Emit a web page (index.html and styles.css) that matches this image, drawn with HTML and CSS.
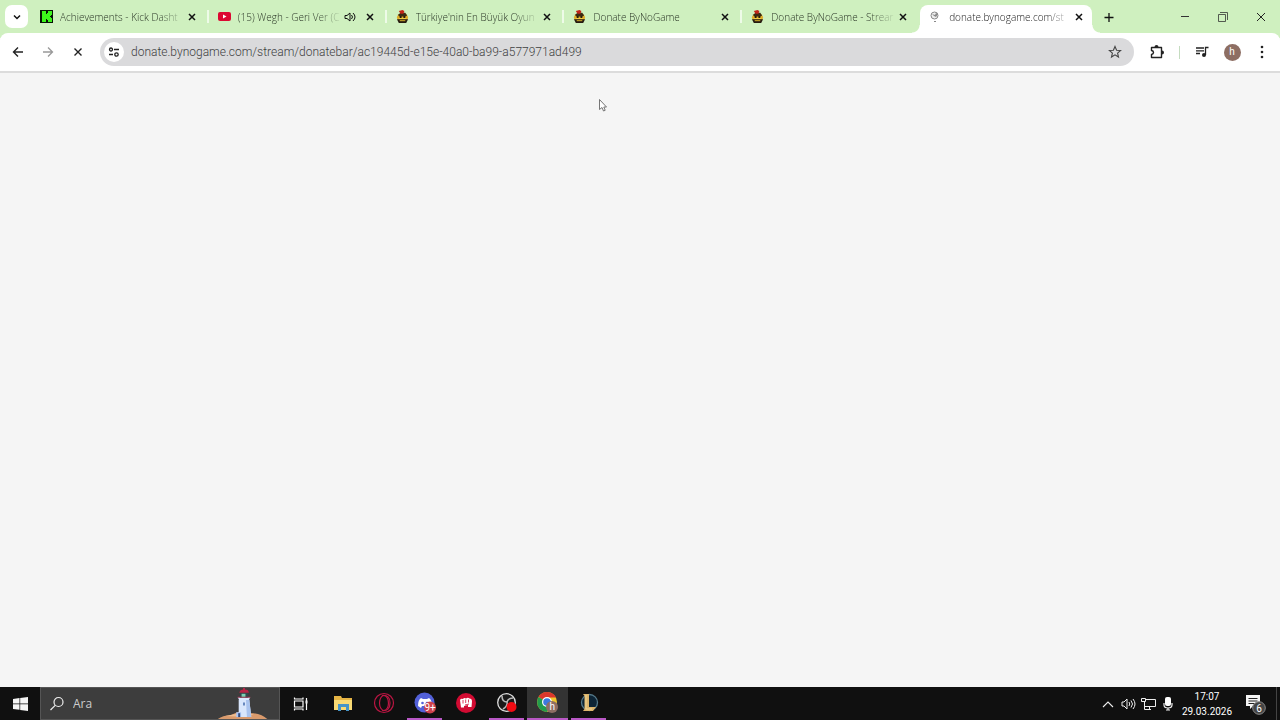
FILE: index.html
```html
<!DOCTYPE html>
<html lang="tr">
<head>
    <meta charset="UTF-8">
    <meta name="viewport" content="width=device-width, initial-scale=1.0">
    <title>donate.bynogame.com</title>
    <link rel="stylesheet" href="styles.css">
</head>
<body>
    <!-- shared icons -->
    <svg class="defs" aria-hidden="true">
        <symbol id="close" viewBox="0 0 12 12">
            <path d="M3 3l6 6M9 3l-6 6" fill="none" stroke="#111" stroke-width="1.5"/>
        </symbol>
        <symbol id="bee" viewBox="0 0 14 14">
            <ellipse cx="7" cy="8" rx="6" ry="4.6" fill="#e0ad28"/>
            <path d="M2 5.5L5 3h5l2 3-2 1H4z" fill="#3b2a12"/>
            <path d="M3 1l4-1 2 1-1 3H5z" fill="#c22418"/>
            <path d="M4 6.500h2v2H4zM8 6.500h2v2H8z" fill="#271b0c"/>
            <path d="M3 9.500h8" stroke="#f7dc52" stroke-width="1"/>
            <path d="M1 10h12l-2 4H3z" fill="#251a10"/>
            <path d="M4 11.500h6" stroke="#e5b92c" stroke-width="1"/>
        </symbol>
    </svg>

    <header class="tabstrip">
        <button class="tab-search" aria-label="Search tabs">
            <svg width="10" height="10" viewBox="0 0 10 10"><path d="M2 3.5l3 3 3-3" fill="none" stroke="#111" stroke-width="1.5"/></svg>
        </button>
        <nav class="tabs">
            <div class="tab">
                <svg class="favicon" viewBox="0 0 13 13"><path d="M0 0h13v13H0z" fill="#071506"/><path d="M2 1h4v3h1V3h1V1h4v4h-1v1h-1v1h1v1h1v4H8v-2H7V9H6v3H2z" fill="#3df51b"/></svg>
                <a class="title" href="#">Achievements - Kick Dasht</a>
                <button class="close" aria-label="Close tab"><svg><use href="#close"/></svg></button>
            </div>
            <div class="tab">
                <svg class="favicon" viewBox="0 0 13 13"><rect y="2" width="13" height="9" rx="2" fill="#dc0932"/><path d="M5 4.500v4l3.500-2z" fill="#fff"/></svg>
                <a class="title" href="#">(15) Wegh - Geri Ver (C</a>
                <button class="close" aria-label="Mute tab"><svg viewBox="0 0 12 12"><path d="M1 4.500h2L6 2v8L3 7.500H1z" fill="none" stroke="#111"/><path d="M7.500 4q2 2 0 4M9 2q4 4 0 8" fill="none" stroke="#111"/></svg></button>
                <button class="close" aria-label="Close tab"><svg><use href="#close"/></svg></button>
            </div>
            <div class="tab">
                <svg class="favicon"><use href="#bee"/></svg>
                <a class="title" href="#">Türkiye'nin En Büyük Oyun</a>
                <button class="close" aria-label="Close tab"><svg><use href="#close"/></svg></button>
            </div>
            <div class="tab">
                <svg class="favicon"><use href="#bee"/></svg>
                <a class="title" href="#">Donate ByNoGame</a>
                <button class="close" aria-label="Close tab"><svg><use href="#close"/></svg></button>
            </div>
            <div class="tab">
                <svg class="favicon"><use href="#bee"/></svg>
                <a class="title" href="#">Donate ByNoGame - Strear</a>
                <button class="close" aria-label="Close tab"><svg><use href="#close"/></svg></button>
            </div>
            <div class="tab active">
                <svg class="favicon" viewBox="0 0 13 13"><circle cx="5.500" cy="5.500" r="3.500" fill="#eee" stroke="#888"/><path d="M3 4l3 1 1-2 2 1-2 3-2-1z" fill="#888"/><path d="M5 11.500h2" stroke="#888"/></svg>
                <a class="title" href="#">donate.bynogame.com/st</a>
                <button class="close" aria-label="Close tab"><svg><use href="#close"/></svg></button>
            </div>
        </nav>
        <button class="new-tab" aria-label="New tab">
            <svg width="12" height="12" viewBox="0 0 12 12"><path d="M6 2v9M1.500 6.500h9" stroke="#111" stroke-width="1.300"/></svg>
        </button>
        <div class="window-buttons">
            <button aria-label="Minimize"><svg width="10" height="10" viewBox="0 0 10 10"><path d="M1 4.500h8" stroke="#333"/></svg></button>
            <button aria-label="Restore"><svg width="10" height="10" viewBox="0 0 10 10"><path d="M.5 2.500h7v7h-7zM2 .5h7.500V8" fill="none" stroke="#333" stroke-width=".8"/></svg></button>
            <button aria-label="Close"><svg width="10" height="10" viewBox="0 0 10 10"><path d="M1 1l8 8M9 1L1 9" stroke="#222"/></svg></button>
        </div>
    </header>

    <div class="toolbar">
        <button class="tool" aria-label="Back"><svg width="12" height="12" viewBox="0 0 12 12"><path d="M11 6H2M6 1.500L1.500 6 6 10.500" fill="none" stroke="#222" stroke-width="1.400"/></svg></button>
        <button class="tool" aria-label="Forward"><svg width="12" height="12" viewBox="0 0 12 12"><path d="M1 6h9M6 1.500l4.500 4.500L6 10.500" fill="none" stroke="#999" stroke-width="1.300"/></svg></button>
        <button class="tool" aria-label="Stop"><svg width="12" height="12" viewBox="0 0 12 12"><path d="M2.500 2.500l7 7M9.500 2.500l-7 7" stroke="#222" stroke-width="1.400"/></svg></button>
        <div class="omnibox">
            <button class="site-info" aria-label="Site information">
                <svg width="12" height="12" viewBox="0 0 12 12" fill="none" stroke="#222" stroke-width="1.300"><circle cx="3" cy="3.500" r="1.500"/><path d="M6 3.500h5M1 8.500h4"/><circle cx="8.500" cy="8.500" r="1.700"/></svg>
            </button>
            <input class="address" type="text" aria-label="Address" value="donate.bynogame.com/stream/donatebar/ac19445d-e15e-40a0-ba99-a577971ad499">
            <button class="star" aria-label="Bookmark this page">
                <svg width="14" height="14" viewBox="0 0 14 14"><path d="M7 1.500l1.600 3.700 4 .3-3 2.600.9 3.900L7 9.900 3.500 12l.9-3.900-3-2.600 4-.3z" fill="none" stroke="#444" stroke-width="1.100"/></svg>
            </button>
        </div>
        <button class="tool" aria-label="Extensions"><svg width="16" height="16" viewBox="0 0 16 16"><path d="M2.500 3.500h10v10h-10v-3q2-.3 2-2t-2-2z" fill="none" stroke="#222" stroke-width="1.400" stroke-linejoin="round"/><path d="M5.500 3a2 2 0 0 1 4 0zM13 6.500a2 2 0 0 1 0 4z" fill="#222"/></svg></button>
        <span class="divider"></span>
        <button class="tool" aria-label="Media"><svg width="14" height="14" viewBox="0 0 14 14"><path d="M1 3h8M1 5.800h8M1 8.500h4M10.500 10V2.500h3" fill="none" stroke="#222" stroke-width="1.300"/><circle cx="9" cy="10" r="2" fill="#222"/></svg></button>
        <button class="tool" aria-label="Profile"><span class="avatar">h</span></button>
        <button class="tool" aria-label="Menu"><svg width="4" height="14" viewBox="0 0 4 14" fill="#222"><circle cx="2" cy="2" r="1.300"/><circle cx="2" cy="7" r="1.300"/><circle cx="2" cy="12" r="1.300"/></svg></button>
    </div>

    <main class="page">
        <svg class="cursor" width="8" height="13" viewBox="0 0 8 13"><path d="M.5.500v10L3 8.500 4.500 12l1.700-.7L4.800 8h2.700z" fill="#fff" stroke="#666" stroke-width=".9"/></svg>
    </main>

    <footer class="taskbar">
        <button class="start" aria-label="Start">
            <svg width="15" height="14" viewBox="0 0 15 14" fill="#f4f4f4"><path d="M0 2l6.500-1v5.500H0zM7.200.900L15 0v6.500H7.200zM0 7.200h6.500v5.600L0 12zM7.200 7.200H15V14l-7.800-1z"/></svg>
        </button>
        <div class="search">
            <svg width="16" height="16" viewBox="0 0 16 16"><circle cx="9.500" cy="6" r="4.500" fill="none" stroke="#eee" stroke-width="1.200"/><path d="M6.200 9.300L1.500 14" stroke="#eee" stroke-width="1.200"/></svg>
            <input type="text" aria-label="Ara" placeholder="Ara">
            <svg class="lighthouse" width="54" height="31" viewBox="0 0 54 32">
                <path d="M0 32q5-4 13-4l7-3 17 1q9 1 14 6z" fill="#d99a6c"/>
                <path d="M8 29l14-3 15 1-7 3z" fill="#edbd91"/>
                <path d="M21.500 12h11l2 18h-13z" fill="#d8e6fc"/>
                <path d="M29 12h3.500l2 18H30z" fill="#a9c3ee"/>
                <path d="M19 25h5v5h-5z" fill="#a9c5f3"/>
                <path d="M21 26h2v4h-2z" fill="#344d7e"/>
                <path d="M26 15h2v3h-2z" fill="#6485bd"/>
                <path d="M20.500 9.500h13l-1.500 3H22z" fill="#dbe9ff"/>
                <path d="M23 5h8v5h-8z" fill="#31494d"/>
                <path d="M24.500 6h4v4h-4z" fill="#7cd0b1"/>
                <path d="M20.500 9.500h13" stroke="#9c304c"/>
                <path d="M22 5q1-3.500 4-3.500V0h2v1.500q4 0 4 3.500z" fill="#b92445"/>
            </svg>
        </div>
        <button class="task-view" aria-label="Task view">
            <svg width="15" height="14" viewBox="0 0 15 14" fill="none" stroke="#fff" stroke-width="1.200"><path d="M1.500 4h8.500v6H1.500zM1.500.500v1.500h8.500V.5M1.500 13.500V12h8.500v1.500M13.500 1v12"/><path d="M12.500 3.500h2v3h-2z" fill="#eee" stroke="none"/></svg>
        </button>
        <nav class="apps">
            <button class="app" aria-label="File Explorer"><svg width="20" height="20" viewBox="0 0 20 20"><path d="M1 3h7l1 2h10v12H1z" fill="#e6b545"/><path d="M1 7h18v10H1z" fill="#f9da74"/><path d="M5 17v-6h11v7h-3v-4H8v4H5z" fill="#4695c8"/></svg></button>
            <button class="app" aria-label="Opera GX"><svg width="22" height="22" viewBox="0 0 22 22" fill="none" stroke="#bb1643" stroke-width="1.200"><circle cx="11" cy="11" r="9.500"/><ellipse cx="11" cy="11" rx="4.500" ry="7.500"/><path d="M9 3.500q8-1 8 7.500t-8 7.500"/></svg></button>
            <button class="app open" aria-label="Discord"><svg width="22" height="22" viewBox="0 0 22 22"><circle cx="10.500" cy="10.500" r="10" fill="#5260d8"/><path d="M4 14q0-6 3-8l2 1h4l2-1q3 2 3 8l-3 2-2-2H8l-1 2z" fill="#fff"/><circle cx="8.500" cy="11" r="1.300" fill="#5260d8"/><circle cx="13" cy="11" r="1.300" fill="#5260d8"/><circle cx="16" cy="15.500" r="6" fill="#cc414c"/><text class="badge" x="10.500" y="19">9+</text></svg></button>
            <button class="app" aria-label="Riot Client"><svg width="20" height="20" viewBox="0 0 20 20"><circle cx="10" cy="10" r="10" fill="#d20b32"/><path d="M4 7q1-2 3-1 1-1.500 3-.5 2-1.500 3.500 0 2.500 0 2.500 3l-.5 5.500H12V12l-4 1v1.500H5z" fill="#fff"/><path d="M7 7v3.500M9.700 6.500v3.500M12.500 6.500v3M9 12l4-1" stroke="#d20b32" stroke-width=".8"/></svg></button>
            <button class="app open" aria-label="OBS Studio"><svg width="20" height="20" viewBox="0 0 20 20"><circle cx="9.500" cy="9.500" r="8.800" fill="#191919" stroke="#ddd" stroke-width="1.300"/><path d="M5 3q0 6 5 6M16 5q-5 0-6 4M10 9q1 4-4 7" fill="none" stroke="#bbb" stroke-width="1.500"/><circle cx="14.500" cy="14" r="5" fill="#f00b12"/></svg></button>
            <button class="app open current" aria-label="Google Chrome"><svg width="22" height="22" viewBox="0 0 22 22"><circle cx="10" cy="10" r="10" fill="#efc72e"/><path d="M10 10L1.500 5A10 10 0 0 1 19 5.500h-9z" fill="#db362c"/><path d="M10 10L1.500 5A10 10 0 0 0 10 20l4-7z" fill="#229b4c"/><circle cx="10" cy="10" r="5" fill="#fff"/><circle cx="10" cy="10" r="3.800" fill="#3c79df"/><circle cx="15" cy="15" r="6" fill="#8d6e63"/><text class="badge" x="12.500" y="18">h</text></svg></button>
            <button class="app open" aria-label="League of Legends"><svg width="20" height="20" viewBox="0 0 20 20"><circle cx="10.500" cy="9.500" r="8" fill="#0e2536" stroke="#54798a" stroke-width="1.300"/><path d="M4 1h6v13h7l-3 4H4l1.500-2V3z" fill="#dcb56c"/><path d="M7 2v14h6" fill="none" stroke="#f0d596"/></svg></button>
        </nav>
        <div class="tray">
            <button aria-label="Show hidden icons"><svg width="12" height="12" viewBox="0 0 12 12"><path d="M1 9l5-5 5 5" fill="none" stroke="#eee" stroke-width="1.100"/></svg></button>
            <button aria-label="Volume"><svg width="15" height="14" viewBox="0 0 15 14" fill="none" stroke="#eee"><path d="M1 5h2l3-3v10L3 9H1zM8 5q1.500 2 0 4M10 3.500q3 3.500 0 7M12 2q4 5 0 10"/></svg></button>
            <button aria-label="Network"><svg width="15" height="14" viewBox="0 0 15 14" fill="none" stroke="#eee"><path d="M4 2.500h10.500v7H4M3.500 5v7.500H10M8.500 10v2M.5 1.500h4v3h-4z"/></svg></button>
            <button aria-label="Microphone"><svg width="12" height="14" viewBox="0 0 12 14"><rect x="3" y="0" width="6" height="9" rx="2" fill="#fff"/><path d="M2 6v2q0 3 4 3t4-3V6M6 11v2.500M4 13h4" fill="none" stroke="#eee" stroke-width="1.200"/></svg></button>
            <div class="clock"><time>17:07</time><time>29.03.2026</time></div>
            <button class="notifications" aria-label="Notifications"><svg width="22" height="22" viewBox="0 0 22 22"><path d="M1 2h14v11H8l-3 3v-3H1z" fill="#f5f5f5"/><path d="M3.500 5.500h9M3.500 8h9M3.500 10.500h6" stroke="#222"/><circle cx="14" cy="15" r="6.300" fill="#454545" stroke="#888"/><text class="badge" x="11.200" y="19">6</text></svg></button>
            <span class="show-desktop"></span>
        </div>
    </footer>
</body>
</html>
```
FILE: styles.css
```css
* {
    box-sizing: border-box;
}
body {
    margin: 0;
    min-height: 100vh;
    display: flex;
    flex-direction: column;
    font-family: Roboto, "Noto Sans", sans-serif;
    font-size: 10px;
    background: #f5f5f5;
}
.defs {
    display: none;
}
button {
    display: flex;
    align-items: center;
    justify-content: center;
    flex-shrink: 0;
    padding: 0;
    border: none;
    background: none;
    font-family: inherit;
}
input {
    flex: 1;
    min-width: 0;
    padding: 0;
    border: none;
    outline: none;
    background: none;
    font-family: inherit;
}

/* tabs */
.tabstrip {
    display: flex;
    height: 38px;
    padding-bottom: 5px;
    background: #cff0bf;
}
.tab-search {
    width: 23px;
    height: 23px;
    margin: 5px 3px 0 5px;
    border-radius: 7px;
    background: #fff;
}
.tabs {
    display: flex;
    flex: 0 1 1061px;
    min-width: 0;
}
.tab {
    position: relative;
    display: flex;
    align-items: center;
    flex: 0 1 178px;
    min-width: 0;
    padding: 0 11px 0 9px;
}
.tab:not(.active)::after {
    content: "";
    position: absolute;
    right: 0;
    top: 10px;
    width: 2px;
    height: 13px;
    background: #eefbe8;
}
.tab:nth-child(5)::after {
    display: none;
}
.tab.active {
    flex-basis: 172px;
    height: 33px;
    margin-top: 5px;
    padding: 0 7px 10px 9px;
    border-radius: 8px 8px 0 0;
    background: #fff;
}
/* curved feet of the open tab */
.tab.active::before,
.tab.active::after {
    content: "";
    position: absolute;
    bottom: 5px;
    width: 8px;
    height: 8px;
}
.tab.active::before {
    left: -8px;
    background: radial-gradient(circle at 0 0, #cff0bf 7px, #fff 8px);
}
.tab.active::after {
    right: -8px;
    background: radial-gradient(circle at 100% 0, #cff0bf 7px, #fff 8px);
}
.favicon {
    flex-shrink: 0;
    width: 13px;
    height: 13px;
    margin-right: 7px;
}
.title {
    flex: 1;
    min-width: 0;
    overflow: hidden;
    white-space: nowrap;
    color: #2b3627;
    font-family: "Open Sans", sans-serif;
    font-weight: 300;
    text-decoration: none;
    mask-image: linear-gradient(to right, #000 calc(100% - 28px), transparent);
}
.active .title {
    color: #222;
}
.close {
    width: 12px;
    height: 12px;
}
.close + .close {
    margin-left: 8px;
}
.close svg {
    width: 12px;
    height: 12px;
}
.new-tab {
    width: 22px;
    margin-left: 6px;
}
.window-buttons {
    display: flex;
    margin-left: auto;
}
.window-buttons button {
    width: 38px;
}

/* toolbar */
.toolbar {
    position: relative;
    display: flex;
    align-items: center;
    height: 40px;
    margin-top: -5px;
    padding: 0 3px;
    border-bottom: 2px solid #dcdcdc;
    border-radius: 8px 8px 0 0;
    background: #fff;
}
.tool {
    width: 30px;
    height: 30px;
}
.omnibox {
    display: flex;
    align-items: center;
    flex: 1;
    height: 28px;
    margin: 0 8px 0 7px;
    padding: 0 12px 0 4px;
    border-radius: 14px;
    background: #dadadc;
}
.site-info {
    width: 20px;
    height: 20px;
    margin-right: 7px;
    border-radius: 50%;
    background: #fff;
}
.address {
    height: 20px;
    color: #3f3f42;
    font-size: 12px;
    font-weight: 300;
}
.divider {
    width: 1px;
    height: 13px;
    margin: 0 7px;
    background: #c5dcc0;
}
.avatar {
    width: 17px;
    height: 17px;
    border-radius: 50%;
    background: #8d6e63;
    color: #fff;
    font-size: 10px;
    line-height: 16px;
}

/* page */
.page {
    position: relative;
    flex: 1;
    background: #f5f5f5;
}
.cursor {
    position: absolute;
    left: 599px;
    top: 26px;
}

/* taskbar */
.taskbar {
    display: flex;
    height: 33px;
    background: #101010;
    color: #fff;
}
.start {
    width: 40px;
}
.search {
    display: flex;
    align-items: center;
    width: 240px;
    padding: 0 8px;
    border: 1px solid #555;
    background: #3d3d3d;
}
.search input {
    margin-left: 8px;
    color: #fff;
    font-family: "Open Sans", sans-serif;
    font-size: 12px;
}
.search input::placeholder {
    color: #ccc;
}
.lighthouse {
    align-self: flex-end;
}
.task-view {
    width: 40px;
}
.apps {
    display: flex;
    margin-left: 2px;
}
.app {
    width: 41px;
    border-bottom: 2px solid transparent;
}
.app.open {
    width: 35px;
    margin: 0 3px;
    border-color: #b958c6;
}
.app.current {
    width: 41px;
    margin: 0;
    background-color: #333;
}
.badge {
    fill: #fff;
    font-size: 10px;
}
.tray {
    display: flex;
    margin-left: auto;
}
.tray button {
    width: 20px;
}
.clock {
    display: flex;
    flex-direction: column;
    justify-content: center;
    align-items: center;
    width: 58px;
    line-height: 15px;
}
.tray .notifications {
    width: 40px;
}
.show-desktop {
    width: 4px;
    border-left: 1px solid #444;
}
```
